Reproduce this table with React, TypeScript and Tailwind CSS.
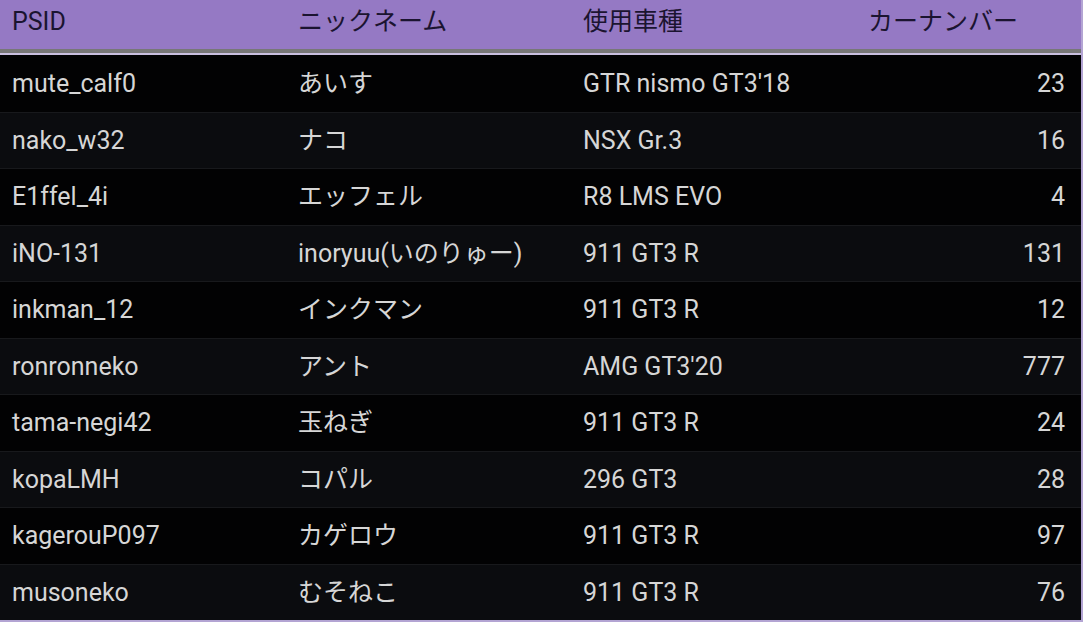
const rows = [
  ['mute_calf0', 'あいす', "GTR nismo GT3'18", '23'],
  ['nako_w32', 'ナコ', 'NSX Gr.3', '16'],
  ['E1ffel_4i', 'エッフェル', 'R8 LMS EVO', '4'],
  ['iNO-131', 'inoryuu(いのりゅー)', '911 GT3 R', '131'],
  ['inkman_12', 'インクマン', '911 GT3 R', '12'],
  ['ronronneko', 'アント', "AMG GT3'20", '777'],
  ['tama-negi42', '玉ねぎ', '911 GT3 R', '24'],
  ['kopaLMH', 'コパル', '296 GT3', '28'],
  ['kagerouP097', 'カゲロウ', '911 GT3 R', '97'],
  ['musoneko', 'むそねこ', '911 GT3 R', '76'],
]

const font = { fontFamily: 'Roboto, "Noto Sans CJK JP", sans-serif' }

export default function App() {
  return (
    <div className="w-[1085px] h-[622px] bg-white overflow-hidden" style={font}>
      <div className="w-[1083px] border-r-2 border-b-2 border-[#b3a4d3] bg-black">
        <div className="grid grid-cols-[286px_285px_285px_1fr] h-[49px] bg-[#9579c4] text-[25px] leading-none text-[#1b1430] items-center pb-[6px]">
          <div className="pl-3">PSID</div>
          <div className="pl-3">ニックネーム</div>
          <div className="pl-3">使用車種</div>
          <div className="pl-3">カーナンバー</div>
        </div>
        <div className="h-[4px] bg-[#777777]" />
        <div className="h-[2px] bg-[#c9bfe0]" />
        {rows.map((r, i) => (
          <div
            key={r[0]}
            className={`grid grid-cols-[286px_285px_285px_1fr] h-[56.5px] items-center text-[25px] leading-none text-[#d6d6d6] ${
              i % 2 === 0 ? 'bg-[#020203]' : 'bg-[#0b0c0f]'
            } ${i > 0 ? 'border-t border-[#18191c]' : ''}`}
          >
            <div className="pl-3">{r[0]}</div>
            <div className="pl-3">{r[1]}</div>
            <div className="pl-3">{r[2]}</div>
            <div className="pr-4 text-right">{r[3]}</div>
          </div>
        ))}
      </div>
    </div>
  )
}
